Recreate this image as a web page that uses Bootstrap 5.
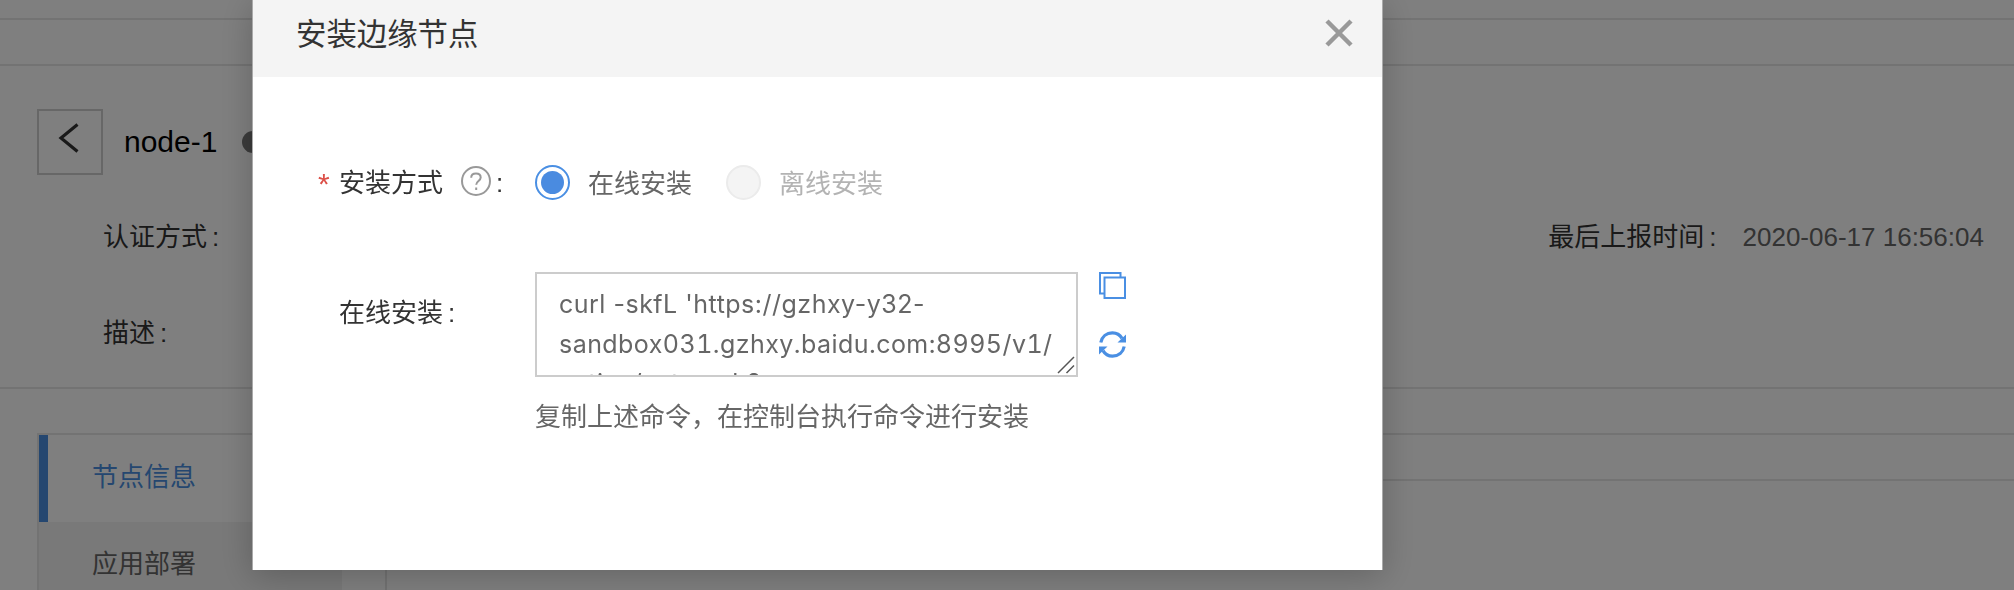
<!DOCTYPE html>
<html lang="zh-CN">
<head>
<meta charset="utf-8">
<title>安装边缘节点</title>
<link href="https://cdn.jsdelivr.net/npm/bootstrap@5.3.0/dist/css/bootstrap.min.css" rel="stylesheet">
<style>
body{font-family:"Liberation Sans","Noto Sans CJK SC",sans-serif;font-size:26px;line-height:40px;color:#333;height:590px;overflow:hidden;background:#fff}
.rule-b{border-bottom:2px solid #e6e6e6}
.top-strip{height:20px}
.crumb-strip{height:46px}
.node-head{height:323px;padding:43px 0 0 37px}
.back-btn{width:66px;height:66px;border:2px solid #cfcfcf;background:none;padding:0 2px 9px 0}
.node-name{font-size:30px;color:#000;margin-left:21px}
.state-dot{width:22px;height:22px;border-radius:50%;background:#777;margin-left:25px}
.info-line{padding-left:66px}
.info-gap{margin-top:42px}
.desc-gap{margin-top:56px}
.last-report{margin-left:1329px}
.cln{display:inline-block;margin-left:5px}
.val{color:#666;margin-left:26px;white-space:nowrap}
.tabs-gap{height:44px}
.tab-area{padding-left:37px}
.side-tabs{width:305px;border:2px solid #e6e6e6;border-right:0;border-bottom:0;background:#f2f2f2}
.side-tabs .tab-item{height:87px;padding:0 0 3px 53px;color:#666;white-space:nowrap}
.side-tabs .tab-item.active{background:#fff;color:#4a8fe0;border-left:9px solid #4a8fe0;padding-left:44px}
.main-head{border-top:2px solid #e6e6e6;height:46px}
.main-pane{border:2px solid #e6e6e6;border-right:0;margin-left:43px;height:140px}
.install-dialog{width:1131px;max-width:none;margin:0 0 0 252px}
.install-dialog .modal-content{height:570px;border:0;border-left:1px solid #aaa;border-right:1px solid #aaa;border-radius:0;box-shadow:0 6px 32px rgba(0,0,0,.22);color:#333}
.install-dialog .modal-header{height:77px;background:#f4f4f4;border:0;border-radius:0;padding:0 29px 11px 43px}
.dlg-title{font-size:30.4px;margin:0;padding-top:2px;font-weight:400}
.install-dialog .modal-body{padding:84px 0 0 65px}
.req{color:#dc5048;width:21px;font-size:30px;padding-top:3px}
.lbl{width:196px}
.opt,.opt-off{margin-left:18px;padding-top:3px}
.opt{color:#666}
.opt-off{color:#b3b3b3}
.radio-off{margin-left:34px}
.cmd-row{margin-top:68px}
.lbl-low{padding-top:21px}
.cmd-box{width:543px;height:105px;border:2px solid #ccc;padding:11px 0 0 22px;font-family:Inter,sans-serif;font-size:25px;line-height:39.5px;letter-spacing:.5px;color:#666;overflow:hidden;white-space:nowrap}
.cmd-host{font-variant-numeric:tabular-nums;letter-spacing:.45px}
.grip{right:3px;bottom:3px}
.cmd-tools{margin-left:21px;gap:32px}
.hint{color:#666;margin:20px 0 0 217px}
</style>
</head>
<body>
<div class="top-strip rule-b"></div>
<div class="crumb-strip rule-b"></div>
<section class="node-head rule-b">
  <div class="d-flex align-items-center">
    <button class="back-btn d-flex align-items-center justify-content-center" aria-label="返回"><svg width="24" height="32" viewBox="0 0 24 32" fill="none" stroke="#333" stroke-width="3.200"><path d="M20.500 2.500 4 16 20.500 29.500"/></svg></button>
    <span class="node-name">node-1</span><span class="state-dot"></span>
  </div>
  <div class="info-line info-gap d-flex"><span>认证方式<span class="cln">:</span></span><span class="last-report">最后上报时间<span class="cln">:</span></span><span class="val">2020-06-17 16:56:04</span></div>
  <div class="info-line desc-gap">描述<span class="cln">:</span></div>
</section>
<div class="tabs-gap"></div>
<div class="tab-area d-flex">
  <nav class="side-tabs">
    <div class="tab-item active d-flex align-items-center">节点信息</div>
    <div class="tab-item d-flex align-items-center">应用部署</div>
  </nav>
  <div class="flex-grow-1"><div class="main-head"></div><div class="main-pane"></div></div>
</div>

<div class="modal-backdrop show"></div>
<div class="modal d-block overflow-hidden" tabindex="-1" role="dialog">
  <div class="modal-dialog install-dialog">
    <div class="modal-content">
      <div class="modal-header">
        <h5 class="dlg-title">安装边缘节点</h5>
        <svg width="28" height="28" viewBox="0 0 28 28" fill="none" stroke="#999" stroke-width="4.500"><path d="M2 2 26 26M26 2 2 26"/></svg>
      </div>
      <div class="modal-body">
        <div class="d-flex align-items-center">
          <span class="req">*</span>
          <span class="lbl d-flex align-items-center">安装方式
            <svg class="mb-1" style="margin-left:18px" width="30" height="30" viewBox="0 0 30 30" fill="none" stroke="#999" stroke-width="2"><circle cx="15" cy="15" r="14"/><path d="M10.200 11.800C10.200 8.800 12.300 7.500 15 7.500s4.700 1.500 4.700 4.100c0 3.300-4.500 3.700-4.500 7.200"/><path d="M15.200 21.500v2.500"/></svg>
            <span class="cln">:</span></span>
          <svg width="35" height="35" viewBox="0 0 35 35"><circle cx="17.500" cy="17.500" r="16.500" fill="#fff" stroke="#4a8fe3" stroke-width="2"/><circle cx="17.500" cy="17.500" r="11.500" fill="#4a8be0"/></svg>
          <span class="opt">在线安装</span>
          <svg class="radio-off" width="35" height="35" viewBox="0 0 35 35"><circle cx="17.500" cy="17.500" r="16.500" fill="#f4f4f4" stroke="#ebebeb" stroke-width="2"/></svg>
          <span class="opt-off">离线安装</span>
        </div>
        <div class="cmd-row d-flex">
          <span class="req"></span>
          <span class="lbl lbl-low">在线安装<span class="cln">:</span></span>
          <div class="position-relative">
            <div class="cmd-box">curl -skfL 'https://gzhxy-y32-<br><span class="cmd-host">sandbox031.gzhxy.baidu.com:8995/v1/</span><br>active/setup.sh?</div>
            <svg class="grip position-absolute" width="18" height="18" viewBox="0 0 18 18" fill="none" stroke="#555" stroke-width="1.500"><path d="M1 17 17 1M9.500 17 17 9.500"/></svg>
          </div>
          <div class="cmd-tools d-flex flex-column">
            <svg width="27" height="27" viewBox="0 0 27 27" fill="none" stroke="#4a8fe3" stroke-width="2"><path d="M5.500 21.500H1V1h20.500v4.500"/><rect x="5.500" y="5.500" width="20.500" height="20.500"/></svg>
            <svg width="27" height="27" viewBox="0 0 27 27" fill="none" stroke="#4a8fe3" stroke-width="3.200"><path d="M1.800 11.500C3 5.500 7.500 1.900 13.500 1.900c4 0 7.500 2 9.500 5.500M25.200 15.500C24 21.500 19.500 25.100 13.500 25.100c-4 0-7.500-2-9.500-5.500"/><path d="M27 3.500V11.500H18.500zM0 23.500V15.500H8.500z" fill="#4a8fe3" stroke="none"/></svg>
          </div>
        </div>
        <div class="hint">复制上述命令，在控制台执行命令进行安装</div>
      </div>
    </div>
  </div>
</div>
<script src="https://cdn.jsdelivr.net/npm/bootstrap@5.3.0/dist/js/bootstrap.bundle.min.js"></script>
</body>
</html>
